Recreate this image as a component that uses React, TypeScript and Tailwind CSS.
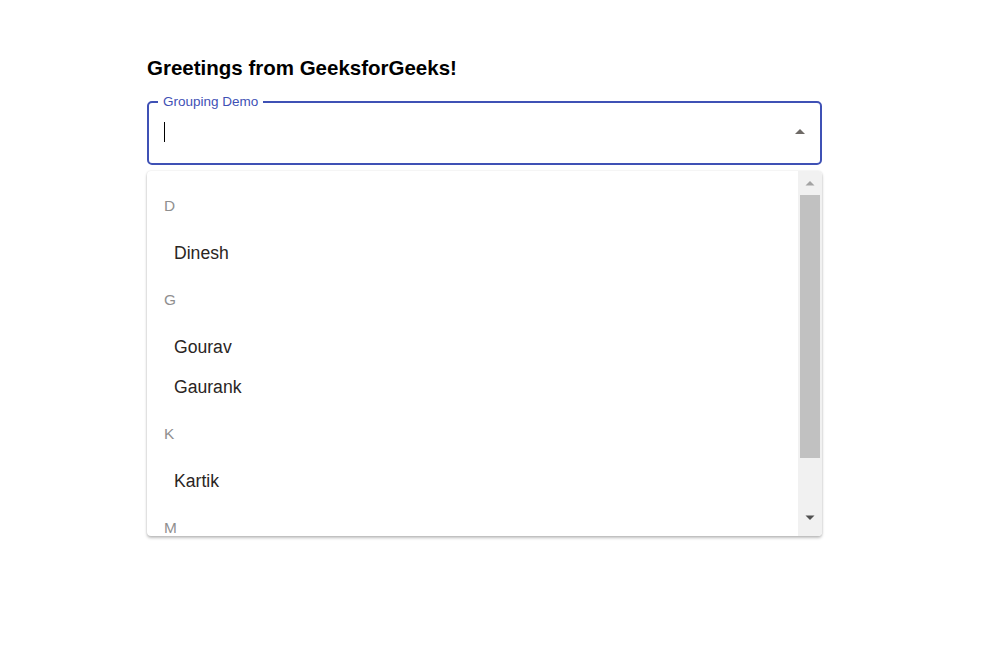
import React from "react";

const groups: { letter: string; items: string[] }[] = [
  { letter: "D", items: ["Dinesh"] },
  { letter: "G", items: ["Gourav", "Gaurank"] },
  { letter: "K", items: ["Kartik"] },
  { letter: "M", items: [] },
];

export default function App() {
  return (
    <div
      className="w-[997px] h-[653px] bg-white"
      style={{ fontFamily: '"Liberation Sans", Arial, sans-serif' }}
    >
      <div className="pl-[147px] pt-[56px] w-[822px]">
        <h3 className="text-[20.5px] font-bold leading-[24px] text-black">
          Greetings from GeeksforGeeks!
        </h3>
        <div className="relative mt-[21px] h-[64px] rounded-[5px] border-2 border-[#3f51b5] flex items-center pl-[15px] pr-[14px]">
          <span className="absolute top-[-9px] left-[9px] bg-white px-[5px] text-[13.5px] leading-[16px] text-[#3f51b5]">
            Grouping Demo
          </span>
          <div className="w-[1px] h-[20px] bg-black mt-[-2px]" />
          <div className="flex-1" />
          <svg width="12" height="7" viewBox="0 0 12 7" className="mt-[-3px]">
            <path d="M1 6 L6 1 L11 6 Z" fill="#6e6a66" />
          </svg>
        </div>
        <div className="mt-[6px] h-[365px] rounded-[4px] bg-white shadow-[0_2px_3px_rgba(0,0,0,0.25),0_0_2px_rgba(0,0,0,0.12)] flex overflow-hidden">
          <div className="flex-1 overflow-hidden pt-[8px]">
            {groups.map((g) => (
              <div key={g.letter}>
                <div className="h-[54px] pl-[17px] flex items-center text-[15.4px] text-[#8f8f8f]">
                  {g.letter}
                </div>
                {g.items.map((it) => (
                  <div
                    key={it}
                    className="h-[40px] pl-[27px] flex items-center text-[17.6px] text-[#2a2523]"
                  >
                    {it}
                  </div>
                ))}
              </div>
            ))}
          </div>
          <div className="w-[24px] bg-[#f1f1f1] flex flex-col items-stretch">
            <div className="h-[24px] flex items-center justify-center">
              <svg width="10" height="6" viewBox="0 0 10 6">
                <path d="M0.5 5.5 L5 1 L9.5 5.5 Z" fill="#a3a3a3" />
              </svg>
            </div>
            <div className="h-[263px] ml-[2px] mr-[2px] bg-[#c1c1c1]" />
            <div className="flex-1" />
            <div className="h-[24px] flex items-center justify-center mb-[6px]">
              <svg width="10" height="6" viewBox="0 0 10 6">
                <path d="M0.5 0.5 L9.5 0.5 L5 5 Z" fill="#505050" />
              </svg>
            </div>
          </div>
        </div>
      </div>
    </div>
  );
}
